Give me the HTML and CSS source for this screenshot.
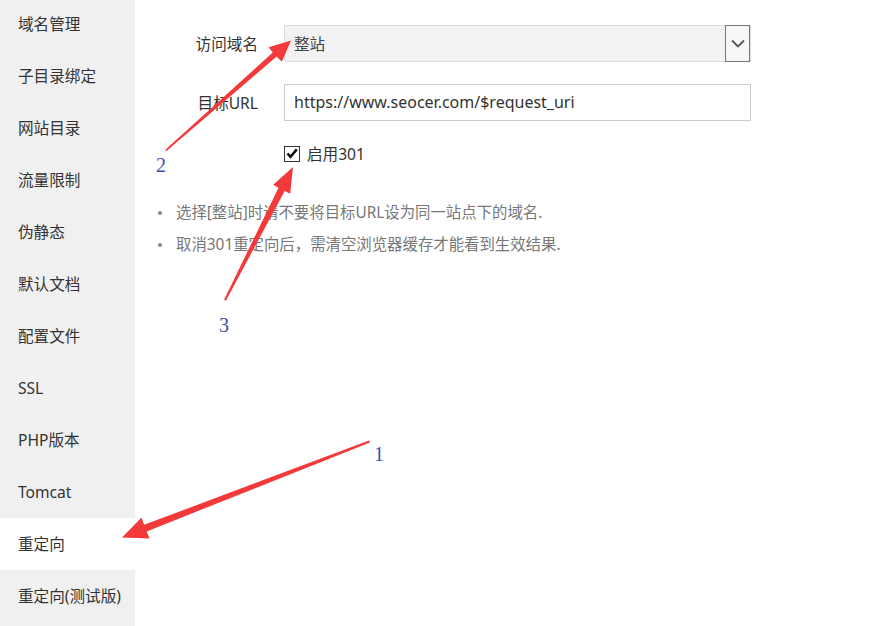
FILE: index.html
```html
<!DOCTYPE html>
<html>
<head>
  <meta charset="utf-8">
  <title>重定向</title>
  <link rel="stylesheet" href="styles.css">
</head>
<body>
  <div class="page">
    <ul class="side-menu">
      <li>域名管理</li>
      <li>子目录绑定</li>
      <li>网站目录</li>
      <li>流量限制</li>
      <li>伪静态</li>
      <li>默认文档</li>
      <li>配置文件</li>
      <li>SSL</li>
      <li>PHP版本</li>
      <li>Tomcat</li>
      <li class="active">重定向</li>
      <li>重定向(测试版)</li>
    </ul>

    <div class="content">
      <form class="redirect-form" action="#">
        <div class="row">
          <span class="row-label">访问域名</span>
          <div class="select-box">
            <span class="select-value">整站</span>
            <span class="select-btn">
              <svg width="14" height="9" viewBox="0 0 14 9"><path d="M1 1.5 L7 7.5 L13 1.5" fill="none" stroke="#555" stroke-width="1.8"/></svg>
            </span>
          </div>
        </div>
        <div class="row">
          <span class="row-label">目标URL</span>
          <div class="text-box">https://www.seocer.com/$request_uri</div>
        </div>
        <div class="row check-row">
          <span class="checkbox">
            <svg width="12" height="11" viewBox="0 0 12 11"><path d="M1.5 5.5 L4.5 8.8 L10.8 1.4" fill="none" stroke="#111" stroke-width="2.6"/></svg>
          </span>
          <span class="check-label">启用301</span>
        </div>
      </form>

      <ul class="notes">
        <li>选择[整站]时请不要将目标URL设为同一站点下的域名.</li>
        <li>取消301重定向后，需清空浏览器缓存才能看到生效结果.</li>
      </ul>
    </div>
  </div>

  <!-- annotation arrows drawn over the screenshot -->
  <svg class="marks" width="879" height="626" viewBox="0 0 879 626">
    <polygon fill="#f23a3a" points="369,440.5 144.1,524.8 141.5,517.5 122,537.5 149.5,538.5 146.7,531.4 370,442.5"/>
    <polygon fill="#f23a3a" points="165,150 272.8,52.6 268.6,47.2 291,40.5 281.8,61.8 276.6,56.6 166.5,151"/>
    <polygon fill="#f23a3a" points="224,300 278.5,187.7 273.2,184.8 293,167 290.2,193.8 284.7,190.9 226,300.5"/>
    <text x="374" y="461" class="num">1</text>
    <text x="156" y="172" class="num">2</text>
    <text x="219" y="332" class="num">3</text>
  </svg>
</body>
</html>
```

FILE: styles.css
```css
html, body {
  margin: 0;
  padding: 0;
  height: 100%;
}

body {
  background: #fff;
  font-family: "Noto Sans", "Noto Sans CJK SC", sans-serif;
  color: #333;
  overflow: hidden;
}

.page {
  display: flex;
  height: 100%;
}

.side-menu {
  list-style: none;
  margin: 0;
  padding: 0;
  width: 135px;
  flex-shrink: 0;
  background: #f0f0f0;
  margin-top: -2px;
}
.side-menu li {
  height: 52px;
  line-height: 52px;
  padding-left: 18px;
  font-size: 15.6px;
  color: #333;
}
.side-menu li.active {
  background: #fff;
}

.content {
  flex: 1;
  padding: 25px 0 0 23px;
}

.row {
  display: flex;
  align-items: center;
  margin-bottom: 22px;
}

.row-label {
  width: 100px;
  text-align: right;
  margin-right: 26px;
  font-size: 15.6px;
  color: #333;
}

.select-box {
  width: 465px;
  height: 35px;
  border: 1px solid #ddd;
  background: #f2f2f2;
  display: flex;
  align-items: center;
  justify-content: space-between;
}
.select-value {
  padding-left: 9px;
  font-size: 15.6px;
  color: #444;
}
.select-btn {
  width: 23px;
  height: 35px;
  border: 1px solid #777;
  background: #f7f7f7;
  display: flex;
  align-items: center;
  justify-content: center;
}

.text-box {
  width: 456px;
  height: 35px;
  line-height: 35px;
  border: 1px solid #ccc;
  padding-left: 9px;
  font-size: 16px;
  color: #333;
}

.check-row {
  padding-left: 126px;
  margin-bottom: 0;
  margin-top: -1px;
}
.checkbox {
  width: 14px;
  height: 14px;
  border: 1px solid #333;
  background: #fff;
  display: flex;
  align-items: center;
  justify-content: center;
  margin-right: 7px;
}
.check-label {
  font-size: 15.6px;
  color: #333;
}

.notes {
  list-style: none;
  margin: 0;
  padding: 32px 0 0 0;
}
.notes li {
  position: relative;
  padding-left: 18px;
  font-size: 15.4px;
  line-height: 32px;
  color: #777;
}
.notes li::before {
  content: "";
  position: absolute;
  left: 0;
  top: 14px;
  width: 4px;
  height: 4px;
  border-radius: 50%;
  background: #888;
}

.marks {
  position: absolute;
  left: 0;
  top: 0;
  pointer-events: none;
}
.num {
  font-family: "Liberation Serif", serif;
  font-size: 20px;
  fill: #3a4fa8;
}
```
